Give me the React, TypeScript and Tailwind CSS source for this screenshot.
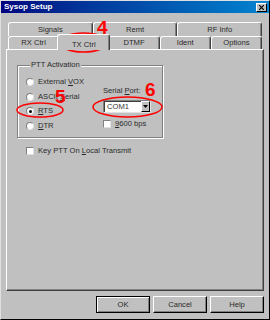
import React from 'react';

const Radio = ({ label, checked }: { label: React.ReactNode; checked?: boolean }) => (
  <div className="flex items-center h-[14.5px]">
    <span className="w-[8px] h-[8px] rounded-full bg-white border border-t-[#808080] border-l-[#808080] border-r-[#e0e0e0] border-b-[#e0e0e0] flex items-center justify-center">
      {checked && <span className="w-[3px] h-[3px] rounded-full bg-black" />}
    </span>
    <span className="ml-[4px] leading-none">{label}</span>
  </div>
);

const Check = ({ label }: { label: React.ReactNode }) => (
  <div className="flex items-center h-[10px]">
    <span className="w-[8px] h-[8px] bg-white border border-t-[#808080] border-l-[#808080] border-r-[#e0e0e0] border-b-[#e0e0e0]" />
    <span className="ml-[4px] leading-none">{label}</span>
  </div>
);

const Tab = ({ label }: { label: string }) => (
  <div className="flex-1 h-full flex items-center justify-center border-t border-l border-white border-r border-r-[#404040] rounded-t-[3px] shadow-[inset_-1px_0_0_#808080]">
    {label}
  </div>
);

const Button = ({ label, isDefault }: { label: string; isDefault?: boolean }) => (
  <div
    className={
      isDefault
        ? 'w-[54px] h-[17px] flex items-center justify-center border border-black shadow-[inset_1px_1px_0_#fff,inset_-1px_-1px_0_#808080]'
        : 'w-[54px] h-[17px] flex items-center justify-center border border-t-white border-l-white border-r-black border-b-black shadow-[inset_-1px_-1px_0_#808080]'
    }
  >
    {label}
  </div>
);

const App = () => {
  const backTabs = ['Signals', 'Remt', 'RF Info'];

  return (
    <div className="w-[270px] h-[320px] relative overflow-hidden bg-[#c0c0c0] border border-t-[#dfdfdf] border-l-[#dfdfdf] border-r-black border-b-black flex flex-col text-[#2a2a2a] text-[7.6px] font-['Liberation_Sans',Arial,sans-serif]">
      {/* title bar */}
      <div className="h-[12px] flex items-center justify-between pl-[3px] pr-[2px] bg-linear-to-r from-[#000080] to-[#1084d0]">
        <span className="text-white font-bold text-[8px] leading-none">Sysop Setup</span>
        <div className="w-[11px] h-[9px] bg-[#c0c0c0] border border-t-white border-l-white border-r-black border-b-black flex items-center justify-center">
          <svg width="5" height="5" viewBox="0 0 5 5">
            <path d="M0 0L5 5M5 0L0 5" stroke="#000" strokeWidth="1.2" />
          </svg>
        </div>
      </div>

      <div className="px-[5px] pt-[9px] flex flex-col">
        {/* tabs */}
        <div className="px-[2px]">
          <div className="flex h-[14px]">
            {backTabs.map((t) => (
              <Tab key={t} label={t} />
            ))}
          </div>
          <div className="flex h-[13px]">
            <Tab label="RX Ctrl" />
            <div className="flex-1 h-full">
              <div className="relative z-10 -mt-[2px] -mx-[2px] h-[16px] bg-[#c0c0c0] flex items-start pt-[4px] justify-center border-t border-l border-white border-r border-r-[#404040] rounded-t-[3px] shadow-[inset_-1px_0_0_#808080]">
                TX Ctrl
              </div>
            </div>
            <Tab label="DTMF" />
            <Tab label="Ident" />
            <Tab label="Options" />
          </div>
        </div>

        {/* panel */}
        <div className="h-[242px] border border-t-white border-l-white border-r-[#404040] border-b-[#404040] shadow-[inset_-1px_-1px_0_#808080] pl-[10px] pt-[10px]">
          <fieldset className="w-[146px] h-[78px] border border-[#808080] shadow-[1px_1px_0_#fff,inset_1px_1px_0_#fff] px-[8px]">
            <legend className="ml-[4px] px-[1px] leading-[10px] bg-[#c0c0c0]">PTT Activation</legend>
            <div className="flex">
              <div className="w-[77px] pt-[5px]">
                <Radio label={<>External <u>V</u>OX</>} />
                <Radio label={<>ASCII <u>S</u>erial</>} />
                <Radio label={<><u>R</u>TS</>} checked />
                <Radio label={<><u>D</u>TR</>} />
              </div>
              <div className="pt-[16px] flex flex-col">
                <div className="h-[10px] flex items-center">
                  <span>Serial <u>P</u>ort:</span>
                </div>
                <div className="mt-[4px] w-[48px] h-[13px] bg-white border border-t-[#808080] border-l-[#808080] border-r-[#e0e0e0] border-b-[#e0e0e0] shadow-[inset_1px_1px_0_#404040] flex items-center justify-between">
                  <span className="pl-[3px] text-[#333]">COM1</span>
                  <div className="w-[9px] h-full bg-[#c0c0c0] border border-t-white border-l-white border-r-black border-b-black flex items-center justify-center">
                    <svg width="5" height="3" viewBox="0 0 5 3">
                      <path d="M0 0H5L2.5 3Z" fill="#000" />
                    </svg>
                  </div>
                </div>
                <div className="mt-[6px]">
                  <Check label={<><u>9</u>600 bps</>} />
                </div>
              </div>
            </div>
          </fieldset>
          <div className="mt-[8px] ml-[9px]">
            <Check label={<>Key PTT On <u>L</u>ocal Transmit</>} />
          </div>
        </div>

        {/* buttons */}
        <div className="mt-[5px] flex justify-end gap-[3px]">
          <Button label="OK" isDefault />
          <Button label="Cancel" />
          <Button label="Help" />
        </div>
      </div>

      {/* red annotations */}
      <div className="absolute left-[-1px] top-[-1px] w-[270px] h-[320px] pointer-events-none text-[#ff0000] font-bold text-[19px] leading-none">
        <svg width="270" height="320" className="absolute left-0 top-0">
          <ellipse cx="83.5" cy="42.5" rx="24" ry="9.5" fill="none" stroke="#ff0000" strokeWidth="1.5" />
          <ellipse cx="40" cy="110" rx="23" ry="7" fill="none" stroke="#ff0000" strokeWidth="1.5" />
          <ellipse cx="127.5" cy="107" rx="34.5" ry="10" fill="none" stroke="#ff0000" strokeWidth="1.5" />
        </svg>
        <span className="absolute left-[97px] top-[18px]">4</span>
        <span className="absolute left-[55px] top-[87px]">5</span>
        <span className="absolute left-[145px] top-[80px]">6</span>
      </div>
    </div>
  );
};

export default App;
